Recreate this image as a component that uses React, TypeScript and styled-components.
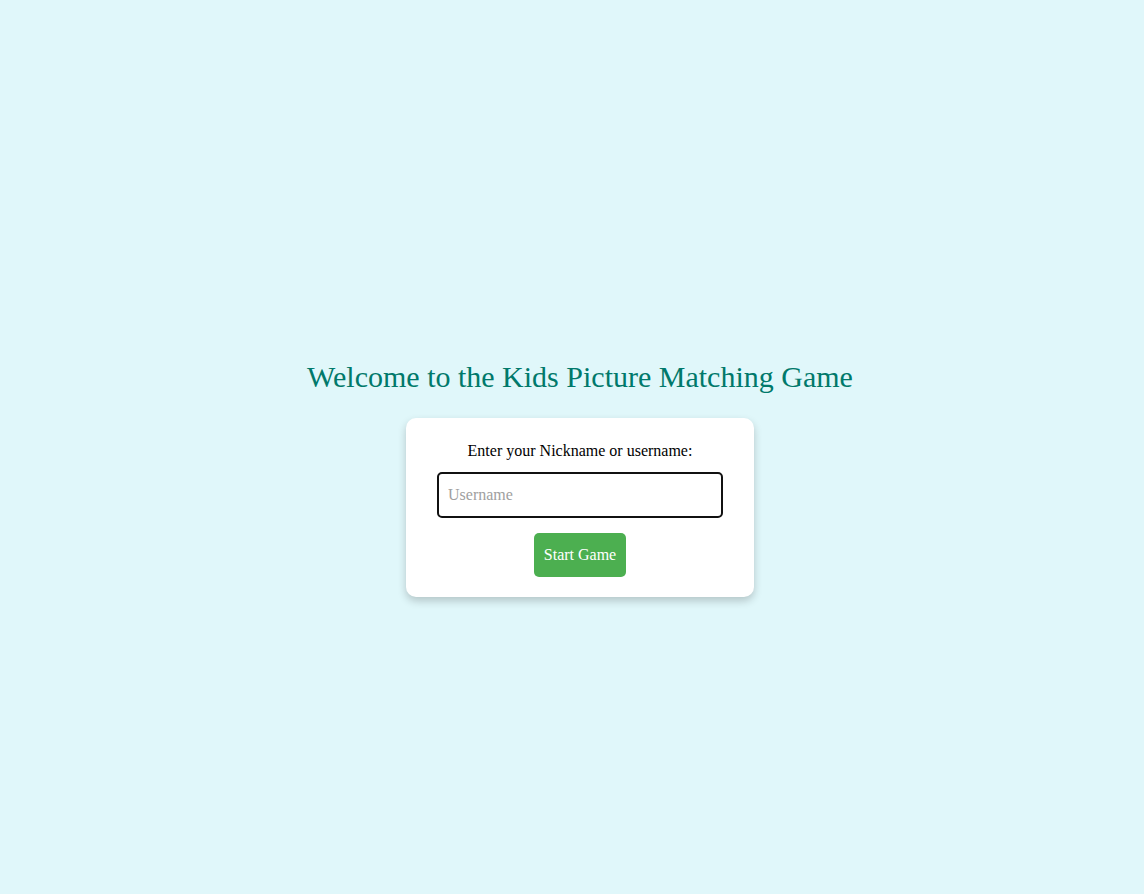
import styled, { createGlobalStyle } from "styled-components";

const GlobalStyle = createGlobalStyle`
  html, body {
    margin: 0;
    padding: 0;
  }
  body {
    background: #e0f7fa;
    font-family: "Liberation Serif", "Times New Roman", serif;
  }
`;

const Page = styled.div`
  min-height: 100vh;
  box-sizing: border-box;
  padding: 62px 0 0 16px;
  display: flex;
  flex-direction: column;
  align-items: center;
  justify-content: center;
`;

const Title = styled.h1`
  color: #00796b;
  font-size: 30px;
  font-weight: normal;
  margin: 0 0 24px;
`;

const Card = styled.div`
  width: 348px;
  box-sizing: border-box;
  background: #fff;
  border-radius: 10px;
  box-shadow: 0 4px 8px rgba(0, 0, 0, 0.2);
  padding: 20px 31px;
  display: flex;
  flex-direction: column;
  align-items: center;
`;

const Label = styled.label`
  font-size: 16px;
  color: #000;
  line-height: 18px;
  margin: 4px 0 12px;
`;

const Input = styled.input`
  width: 100%;
  height: 46px;
  box-sizing: border-box;
  border: 2px solid #111;
  border-radius: 5px;
  padding: 0 9px;
  font-family: inherit;
  font-size: 16px;
  outline: none;

  &::placeholder {
    color: #a0a0a0;
  }
`;

const StartButton = styled.button`
  margin-top: 15px;
  height: 44px;
  padding: 0 10px;
  border: none;
  border-radius: 5px;
  background: #4caf50;
  color: #fff;
  font-family: inherit;
  font-size: 16px;
  cursor: pointer;
`;

export default function App() {
  return (
    <Page>
      <GlobalStyle />
      <Title>Welcome to the Kids Picture Matching Game</Title>
      <Card>
        <Label htmlFor="username">Enter your Nickname or username:</Label>
        <Input id="username" type="text" placeholder="Username" />
        <StartButton>Start Game</StartButton>
      </Card>
    </Page>
  );
}
